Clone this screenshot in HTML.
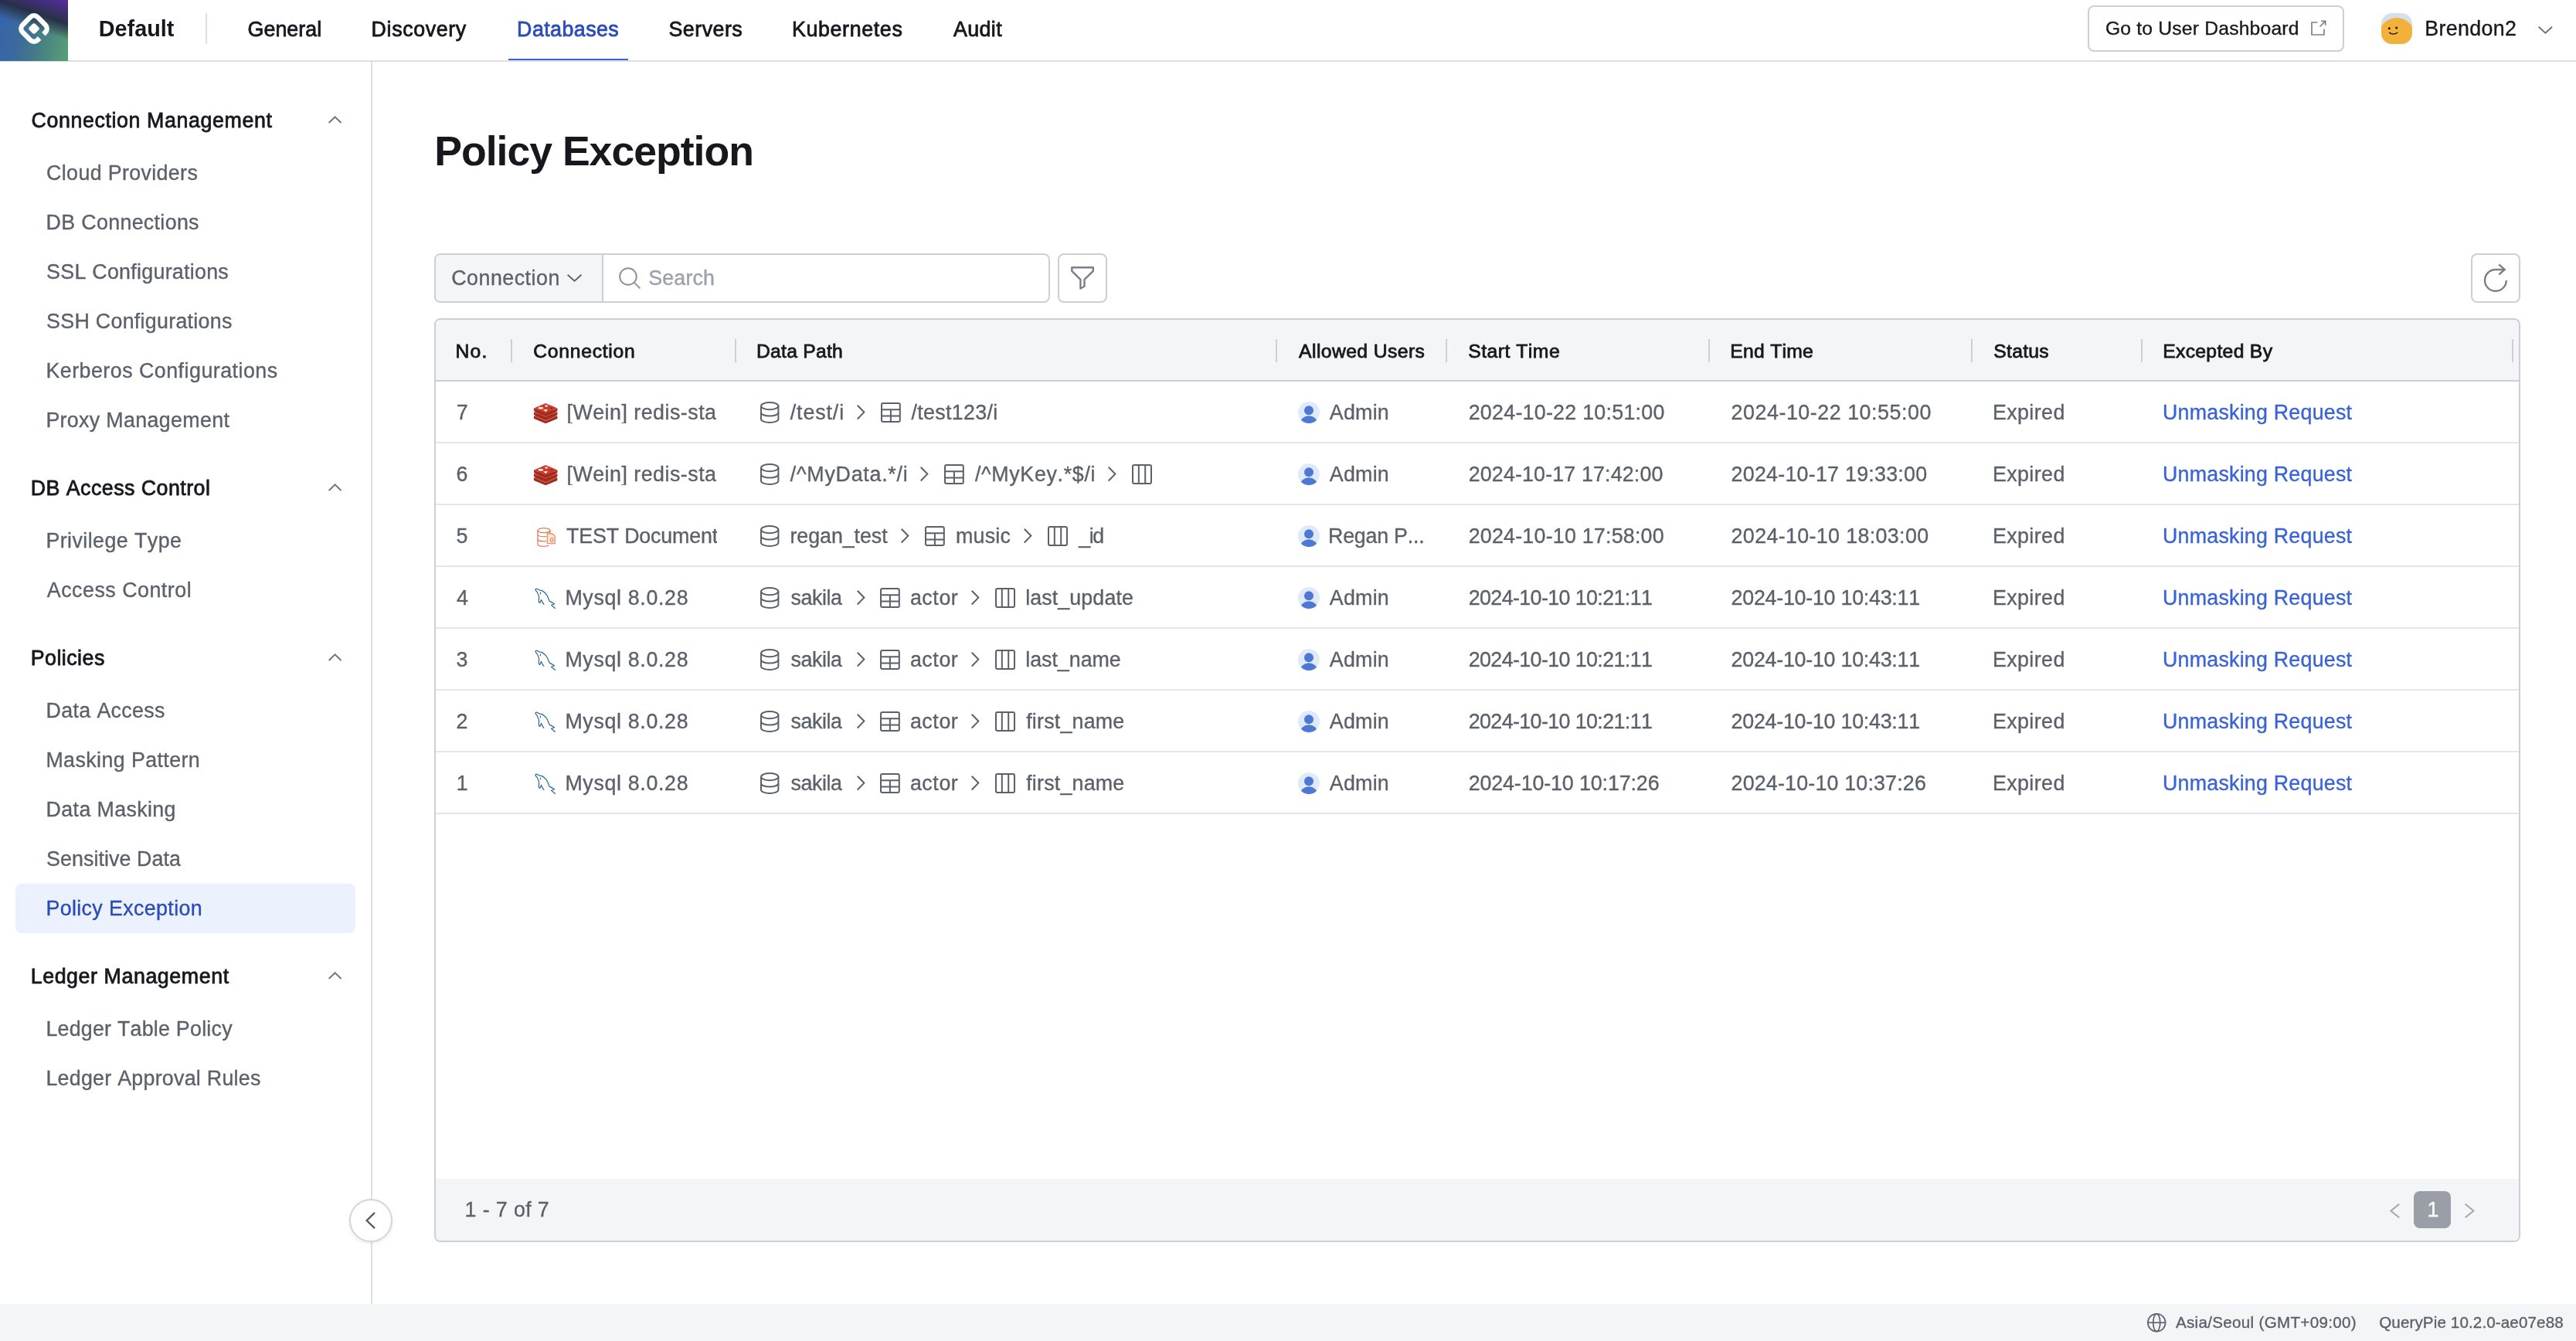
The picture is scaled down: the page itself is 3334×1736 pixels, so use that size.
<!DOCTYPE html>
<html lang="en">
<head>
<meta charset="utf-8">
<title>Policy Exception - QueryPie</title>
<style>
*{box-sizing:border-box;margin:0;padding:0}
html,body{width:3334px;height:1736px;overflow:hidden;background:#fff}
@media (max-width:1700px){html{zoom:.5}}
body{font-family:"Liberation Sans",sans-serif;color:#16181d;position:relative}
.abs{position:absolute}
svg{position:absolute;overflow:visible}
.t{position:absolute;white-space:nowrap;line-height:1;font-kerning:none}
#txt{position:absolute;left:0;top:0;width:3334px;height:1736px;will-change:transform}
#hdr{position:absolute;left:0;top:0;width:3334px;height:80px;border-bottom:2px solid #dcdfe5;background:#fff}
#logo{position:absolute;left:0;top:0;width:88px;height:79px;
background:
linear-gradient(19deg,rgba(40,50,74,0) 52%,rgba(40,50,70,.55) 62%,rgba(38,46,66,.96) 71%,#3d2f72 84%,#552e9c 100%),
linear-gradient(100deg,#3563ad 0%,#3a6a9d 30%,#43798a 55%,#4f8f7c 80%,#56a077 100%)}
#side{position:absolute;left:0;top:80px;width:482px;height:1608px;border-right:2px solid #dcdfe5}
#sel{position:absolute;left:20px;top:1144px;width:440px;height:64px;border-radius:8px;background:#ebf1fd}
#foot{position:absolute;left:0;top:1688px;width:3334px;height:48px;background:#f4f5f7}
.box{position:absolute;border:2px solid #cdcfd6;border-radius:8px;background:#fff}
#tbl{position:absolute;left:562px;top:412px;width:2700px;height:1196px;border:2px solid #cdcfd6;border-radius:8px;background:#fff;overflow:hidden}
#th{position:absolute;left:0;top:0;width:2696px;height:80px;background:#f4f5f7;border-bottom:2px solid #cdcfd6}
#tf{position:absolute;left:0;top:1112px;width:2696px;height:80px;background:#f4f5f7}
.sep{position:absolute;top:439px;width:2px;height:30px;background:#cdcfd6}
.rowline{position:absolute;left:564px;width:2696px;height:2px;background:#e3e6ea}
</style>
</head>
<body>
<div id="hdr"><div id="logo"></div><svg width="88" height="79" viewBox="0 0 88 79" style="left:0;top:0">
<g transform="translate(44 37) rotate(45)" fill="none" stroke="#fff" stroke-width="6.4">
<path d="M13.8 -3.7 L13.8 -7 A6.8 6.8 0 0 0 7 -13.8 L-7 -13.8 A6.8 6.8 0 0 0 -13.8 -7 L-13.8 7 A6.8 6.8 0 0 0 -7 13.8 L7 13.8 A6.8 6.8 0 0 0 13.8 7 L13.8 3.7"/>
<rect x="-5.6" y="-5.6" width="11.2" height="11.2" rx="3" fill="#fff" stroke="none"/></g></svg>
<div class="abs" style="left:266px;top:17px;width:2px;height:40px;background:#dcdfe5"></div>
<div class="abs" style="left:658px;top:76px;width:155px;height:2px;background:#3b62d6"></div>

<div class="box" style="left:2702px;top:7px;width:332px;height:60px"></div>
<svg class="abs" style="left:2990.0px;top:26.0px" width="22" height="22" viewBox="0 0 22 22" ><g fill="none" stroke="#7d828b" stroke-width="1.7"><path d="M9.5 3 H2 V19 H18 V11.5"/><path d="M12.5 8.5 L19.6 1.4 M14.2 1.3 H19.7 V6.8"/></g></svg>
<svg class="abs" style="left:3082.0px;top:17.0px" width="40" height="40" viewBox="0 0 40 40" ><defs><clipPath id="av"><rect width="40" height="40" rx="14"/></clipPath></defs><g clip-path="url(#av)"><rect width="40" height="40" fill="#d6dfec"/><circle cx="20" cy="29" r="23" fill="#f2b138"/><circle cx="10.3" cy="19.7" r="1.5" fill="#111"/><circle cx="19.7" cy="18.9" r="1.5" fill="#111"/><path d="M10.6 25.4 Q15.6 28.8 20.8 25.2" fill="none" stroke="#111" stroke-width="1.3" stroke-linecap="round"/></g></svg>
<svg class="abs" style="left:3285.0px;top:33.7px" width="18.8" height="10.1" viewBox="0 0 18.8 10.1" ><path d="M0.68 0.68 L9.40 8.73 L18.12 0.68" fill="none" stroke="#6b717c" stroke-width="1.9" stroke-linejoin="miter"/></svg>

</div>
<div id="side"></div>
<div id="sel"></div>
<svg class="abs" style="left:425.4px;top:150.3px" width="17.2" height="9.7" viewBox="0 0 17.2 9.7" ><path d="M0.68 9.02 L8.60 1.37 L16.52 9.02" fill="none" stroke="#6b717c" stroke-width="1.9" stroke-linejoin="miter"/></svg>
<svg class="abs" style="left:425.4px;top:626.3px" width="17.2" height="9.7" viewBox="0 0 17.2 9.7" ><path d="M0.68 9.02 L8.60 1.37 L16.52 9.02" fill="none" stroke="#6b717c" stroke-width="1.9" stroke-linejoin="miter"/></svg>
<svg class="abs" style="left:425.4px;top:846.3px" width="17.2" height="9.7" viewBox="0 0 17.2 9.7" ><path d="M0.68 9.02 L8.60 1.37 L16.52 9.02" fill="none" stroke="#6b717c" stroke-width="1.9" stroke-linejoin="miter"/></svg>
<svg class="abs" style="left:425.4px;top:1258.3px" width="17.2" height="9.7" viewBox="0 0 17.2 9.7" ><path d="M0.68 9.02 L8.60 1.37 L16.52 9.02" fill="none" stroke="#6b717c" stroke-width="1.9" stroke-linejoin="miter"/></svg>
<div id="foot"></div>

<div class="box" style="left:562px;top:328px;width:797px;height:64px;overflow:hidden"><div class="abs" style="left:0;top:0;width:217px;height:60px;background:#f4f5f7;border-right:2px solid #cdcfd6"></div></div>
<svg class="abs" style="left:733.5px;top:354.6px" width="19.1" height="10.2" viewBox="0 0 19.1 10.2" ><path d="M0.68 0.68 L9.55 8.83 L18.42 0.68" fill="none" stroke="#5d6470" stroke-width="1.9" stroke-linejoin="miter"/></svg>
<svg class="abs" style="left:800.0px;top:345.0px" width="30" height="30" viewBox="0 0 30 30" ><g fill="none" stroke="#8c939d" stroke-width="2"><circle cx="13" cy="13" r="10.8"/><path d="M20.6 20.6 L28.4 28.4"/></g></svg>
<div class="box" style="left:1369px;top:328px;width:64px;height:64px"></div>
<svg class="abs" style="left:1369.0px;top:328.0px" width="64" height="64" viewBox="0 0 64 64" ><path d="M18.3 18.3 H45.8 V22.9 L34.5 33.9 V42.8 L29.4 45.5 V33.9 L18.3 22.9Z" fill="none" stroke="#7a7f88" stroke-width="2.4" stroke-linejoin="round"/></svg>
<div class="box" style="left:3198px;top:328px;width:64px;height:64px"></div>
<svg class="abs" style="left:3198.0px;top:328.0px" width="64" height="64" viewBox="0 0 64 64" ><g fill="none" stroke="#7a7f88" stroke-width="2.4"><path d="M45.8 34.9 A13.9 13.9 0 1 1 31.9 21 H43.4"/><path d="M36.3 14.4 L43.7 20.9 L36.3 27.4"/></g></svg>

<div id="tbl"><div id="th"></div><div id="tf"></div></div>
<div class="sep" style="left:661px"></div>
<div class="sep" style="left:951px"></div>
<div class="sep" style="left:1651px"></div>
<div class="sep" style="left:1871px"></div>
<div class="sep" style="left:2211px"></div>
<div class="sep" style="left:2551px"></div>
<div class="sep" style="left:2771px"></div>
<div class="sep" style="left:3251px"></div>
<div class="rowline" style="top:572px"></div>
<div class="rowline" style="top:652px"></div>
<div class="rowline" style="top:732px"></div>
<div class="rowline" style="top:812px"></div>
<div class="rowline" style="top:892px"></div>
<div class="rowline" style="top:972px"></div>
<div class="rowline" style="top:1052px"></div>
<svg class="abs" style="left:690.9px;top:521.7px" width="30.4" height="26.4" viewBox="0 0 30.4 26.4" ><path d="M0 16.5 V19.9 L15.2 26.299999999999997 L30.4 19.9 V16.5 L15.2 22.9Z" fill="#9c2c1f"/><path d="M15.2 9.9 L30.4 16.5 L15.2 22.9 L0 16.5Z" fill="#c8412f"/><path d="M0 11.6 V15 L15.2 21.4 L30.4 15 V11.6 L15.2 18Z" fill="#9c2c1f"/><path d="M15.2 5 L30.4 11.6 L15.2 18 L0 11.6Z" fill="#c8412f"/><path d="M0 6.6 V10 L15.2 16.4 L30.4 10 V6.6 L15.2 13Z" fill="#9c2c1f"/><path d="M15.2 0 L30.4 6.6 L15.2 13 L0 6.6Z" fill="#cc3b2b"/><ellipse cx="8.9" cy="6.3" rx="3.3" ry="1.25" fill="#fff"/><path d="M15.7 1.7 l.9 1.1 1.9-.3 -1.2 1 .9 1.2 -1.7-.5 -1.3 1 0-1.4 -1.7-.6 1.8-.4Z" fill="#fff"/><path d="M11.9 8.5 L17.9 8.1 L15.6 10.9Z" fill="#fff"/><path d="M22.3 4.9 L24.9 6.1 L22.3 7.3Z" fill="#7a1a0c"/></svg>
<svg class="abs" style="left:984.0px;top:520.0px" width="24.4" height="28" viewBox="0 0 24.4 28" ><g fill="none" stroke="#5b616b" stroke-width="2"><ellipse cx="12.2" cy="5.6" rx="11.2" ry="4.6"/><path d="M1 5.6 V22.4 C1 25 6 27 12.2 27 S23.4 25 23.4 22.4 V5.6"/><path d="M1 14 C1 16.6 6 18.6 12.2 18.6 S23.4 16.6 23.4 14"/></g></svg>
<svg class="abs" style="left:1109.3px;top:524.4px" width="10.8" height="19.2" viewBox="0 0 10.8 19.2" ><path d="M0.72 0.72 L9.36 9.60 L0.72 18.48" fill="none" stroke="#5b616b" stroke-width="2" stroke-linejoin="miter"/></svg>
<svg class="abs" style="left:1140.0px;top:521.0px" width="25.8" height="26" viewBox="0 0 25.8 26" ><g fill="none" stroke="#5b616b" stroke-width="2"><rect x="1" y="1" width="23.8" height="24" rx="2"/><path d="M1 9.2 H24.8 M1 17.4 H24.8 M12.9 9.2 V25"/></g></svg>
<svg class="abs" style="left:1680.0px;top:520.0px" width="28" height="28" viewBox="0 0 28 28" ><defs><clipPath id="uc1"><circle cx="14" cy="14" r="14"/></clipPath></defs><circle cx="14" cy="14" r="14" fill="#dfeafb"/><circle cx="14" cy="11.2" r="6" fill="#4e77d6"/><ellipse cx="14" cy="28" rx="11.2" ry="9.7" fill="#4e77d6" clip-path="url(#uc1)"/></svg>
<svg class="abs" style="left:690.9px;top:601.7px" width="30.4" height="26.4" viewBox="0 0 30.4 26.4" ><path d="M0 16.5 V19.9 L15.2 26.299999999999997 L30.4 19.9 V16.5 L15.2 22.9Z" fill="#9c2c1f"/><path d="M15.2 9.9 L30.4 16.5 L15.2 22.9 L0 16.5Z" fill="#c8412f"/><path d="M0 11.6 V15 L15.2 21.4 L30.4 15 V11.6 L15.2 18Z" fill="#9c2c1f"/><path d="M15.2 5 L30.4 11.6 L15.2 18 L0 11.6Z" fill="#c8412f"/><path d="M0 6.6 V10 L15.2 16.4 L30.4 10 V6.6 L15.2 13Z" fill="#9c2c1f"/><path d="M15.2 0 L30.4 6.6 L15.2 13 L0 6.6Z" fill="#cc3b2b"/><ellipse cx="8.9" cy="6.3" rx="3.3" ry="1.25" fill="#fff"/><path d="M15.7 1.7 l.9 1.1 1.9-.3 -1.2 1 .9 1.2 -1.7-.5 -1.3 1 0-1.4 -1.7-.6 1.8-.4Z" fill="#fff"/><path d="M11.9 8.5 L17.9 8.1 L15.6 10.9Z" fill="#fff"/><path d="M22.3 4.9 L24.9 6.1 L22.3 7.3Z" fill="#7a1a0c"/></svg>
<svg class="abs" style="left:984.0px;top:600.0px" width="24.4" height="28" viewBox="0 0 24.4 28" ><g fill="none" stroke="#5b616b" stroke-width="2"><ellipse cx="12.2" cy="5.6" rx="11.2" ry="4.6"/><path d="M1 5.6 V22.4 C1 25 6 27 12.2 27 S23.4 25 23.4 22.4 V5.6"/><path d="M1 14 C1 16.6 6 18.6 12.2 18.6 S23.4 16.6 23.4 14"/></g></svg>
<svg class="abs" style="left:1191.3px;top:604.4px" width="10.8" height="19.2" viewBox="0 0 10.8 19.2" ><path d="M0.72 0.72 L9.36 9.60 L0.72 18.48" fill="none" stroke="#5b616b" stroke-width="2" stroke-linejoin="miter"/></svg>
<svg class="abs" style="left:1222.2px;top:601.0px" width="25.8" height="26" viewBox="0 0 25.8 26" ><g fill="none" stroke="#5b616b" stroke-width="2"><rect x="1" y="1" width="23.8" height="24" rx="2"/><path d="M1 9.2 H24.8 M1 17.4 H24.8 M12.9 9.2 V25"/></g></svg>
<svg class="abs" style="left:1434.1px;top:604.4px" width="10.8" height="19.2" viewBox="0 0 10.8 19.2" ><path d="M0.72 0.72 L9.36 9.60 L0.72 18.48" fill="none" stroke="#5b616b" stroke-width="2" stroke-linejoin="miter"/></svg>
<svg class="abs" style="left:1465.2px;top:601.0px" width="26" height="26" viewBox="0 0 26 26" ><g fill="none" stroke="#5b616b" stroke-width="2"><rect x="1" y="1" width="24" height="24" rx="2"/><path d="M8.8 1 V25 M17.2 1 V25"/></g></svg>
<svg class="abs" style="left:1680.0px;top:600.0px" width="28" height="28" viewBox="0 0 28 28" ><defs><clipPath id="uc2"><circle cx="14" cy="14" r="14"/></clipPath></defs><circle cx="14" cy="14" r="14" fill="#dfeafb"/><circle cx="14" cy="11.2" r="6" fill="#4e77d6"/><ellipse cx="14" cy="28" rx="11.2" ry="9.7" fill="#4e77d6" clip-path="url(#uc2)"/></svg>
<svg class="abs" style="left:694.5px;top:682.5px" width="24" height="25" viewBox="0 0 24 25" ><g fill="none" stroke="#e2633d" stroke-width="1.05"><ellipse cx="9" cy="3.7" rx="8.05" ry="3"/><path d="M.95 3.7 V21.4 C.95 23.2 4.4 24.3 9 24.3 C11.6 24.3 13.8 23.9 15.2 23.3"/><path d="M17.05 3.7 V7"/><path d="M.95 9.4 C1.6 11 5 11.8 9 11.8 C10.2 11.8 11.2 11.7 12.2 11.6"/><path d="M.95 15.5 C1.6 17 5 17.8 9 17.8 C10.2 17.8 11.2 17.7 12.2 17.6"/></g><path d="M13.4 7.8 H19.9 L23.2 10.9 V20.8 H13.4Z" fill="#fbe6de" stroke="#e9775c" stroke-width="1.1" stroke-linejoin="round"/><path d="M13.4 20.8 V7.8 H19.9" fill="none" stroke="#eda253" stroke-width="1.3"/><path d="M19.6 13.6 C18.2 13.4 17.4 14.6 17.4 16 C17.4 17.6 18.4 18.6 19.8 18.3 M20.4 14.6 C21 15.6 21 17 20.2 18" fill="none" stroke="#e2633d" stroke-width="1"/><circle cx="20.3" cy="13.6" r=".6" fill="#e2633d"/></svg>
<svg class="abs" style="left:984.0px;top:680.0px" width="24.4" height="28" viewBox="0 0 24.4 28" ><g fill="none" stroke="#5b616b" stroke-width="2"><ellipse cx="12.2" cy="5.6" rx="11.2" ry="4.6"/><path d="M1 5.6 V22.4 C1 25 6 27 12.2 27 S23.4 25 23.4 22.4 V5.6"/><path d="M1 14 C1 16.6 6 18.6 12.2 18.6 S23.4 16.6 23.4 14"/></g></svg>
<svg class="abs" style="left:1166.3px;top:684.4px" width="10.8" height="19.2" viewBox="0 0 10.8 19.2" ><path d="M0.72 0.72 L9.36 9.60 L0.72 18.48" fill="none" stroke="#5b616b" stroke-width="2" stroke-linejoin="miter"/></svg>
<svg class="abs" style="left:1197.2px;top:681.0px" width="25.8" height="26" viewBox="0 0 25.8 26" ><g fill="none" stroke="#5b616b" stroke-width="2"><rect x="1" y="1" width="23.8" height="24" rx="2"/><path d="M1 9.2 H24.8 M1 17.4 H24.8 M12.9 9.2 V25"/></g></svg>
<svg class="abs" style="left:1325.0px;top:684.4px" width="10.8" height="19.2" viewBox="0 0 10.8 19.2" ><path d="M0.72 0.72 L9.36 9.60 L0.72 18.48" fill="none" stroke="#5b616b" stroke-width="2" stroke-linejoin="miter"/></svg>
<svg class="abs" style="left:1355.9px;top:681.0px" width="26" height="26" viewBox="0 0 26 26" ><g fill="none" stroke="#5b616b" stroke-width="2"><rect x="1" y="1" width="24" height="24" rx="2"/><path d="M8.8 1 V25 M17.2 1 V25"/></g></svg>
<svg class="abs" style="left:1680.0px;top:680.0px" width="28" height="28" viewBox="0 0 28 28" ><defs><clipPath id="uc3"><circle cx="14" cy="14" r="14"/></clipPath></defs><circle cx="14" cy="14" r="14" fill="#dfeafb"/><circle cx="14" cy="11.2" r="6" fill="#4e77d6"/><ellipse cx="14" cy="28" rx="11.2" ry="9.7" fill="#4e77d6" clip-path="url(#uc3)"/></svg>
<svg class="abs" style="left:686.0px;top:754.0px" width="42" height="40" viewBox="0 0 42 40" ><g fill="none" stroke="#20608f" stroke-width="1.15" stroke-linejoin="round" stroke-linecap="round"><path d="M7.3 9.2 C7 8.4 8 8 8.7 8.2 C9.4 8.3 9.9 8.6 10.4 8.9 C11.2 9.5 11.8 10 12.5 10.1 C13.3 10.3 14 10.2 14.9 10.4 C16 10.8 17 11.5 17.9 12.2 C19 13 19.9 14 20.6 14.9 C21.5 16 22.2 17.1 22.7 18.2 C23.2 19.2 23.5 20.2 23.9 21.2 C24.2 22.2 24.6 23.2 25.1 23.9 C25.6 24.5 26.2 24.8 26.9 25.1 C27.8 25.5 28.7 25.9 29.6 26.4 C30.3 26.8 31 27.3 31.6 27.8 C30.2 28.2 28.8 28.7 27.5 29.4 C28.3 30.1 29.1 30.7 29.9 31.3 C30.8 32 31.7 32.7 32.5 33.4"/><path d="M7.3 9.2 C7.1 10.2 7.6 11 8.3 11.5 C8.7 11.8 9 12 9.2 12.4 C9.5 13 9.7 13.7 9.9 14.3 C10.3 15.1 10.7 15.9 11 16.7 C11.4 17.6 11.6 18.5 11.6 19.4 C11.6 20.5 11.4 21.6 11.3 22.7 C11.3 23.7 11.3 24.6 11.6 25.4 C11.9 26 12.3 26.4 12.8 26.4 C13.4 25.2 14 23.8 14.5 22.4 C14.8 23.2 15.1 24 15.5 24.8 C16.2 26.1 17 27.3 17.9 28.4"/><path d="M13.4 13.1 V14.8"/></g></svg>
<svg class="abs" style="left:984.0px;top:760.0px" width="24.4" height="28" viewBox="0 0 24.4 28" ><g fill="none" stroke="#5b616b" stroke-width="2"><ellipse cx="12.2" cy="5.6" rx="11.2" ry="4.6"/><path d="M1 5.6 V22.4 C1 25 6 27 12.2 27 S23.4 25 23.4 22.4 V5.6"/><path d="M1 14 C1 16.6 6 18.6 12.2 18.6 S23.4 16.6 23.4 14"/></g></svg>
<svg class="abs" style="left:1108.5px;top:764.4px" width="10.8" height="19.2" viewBox="0 0 10.8 19.2" ><path d="M0.72 0.72 L9.36 9.60 L0.72 18.48" fill="none" stroke="#5b616b" stroke-width="2" stroke-linejoin="miter"/></svg>
<svg class="abs" style="left:1139.3px;top:761.0px" width="25.8" height="26" viewBox="0 0 25.8 26" ><g fill="none" stroke="#5b616b" stroke-width="2"><rect x="1" y="1" width="23.8" height="24" rx="2"/><path d="M1 9.2 H24.8 M1 17.4 H24.8 M12.9 9.2 V25"/></g></svg>
<svg class="abs" style="left:1257.4px;top:764.4px" width="10.8" height="19.2" viewBox="0 0 10.8 19.2" ><path d="M0.72 0.72 L9.36 9.60 L0.72 18.48" fill="none" stroke="#5b616b" stroke-width="2" stroke-linejoin="miter"/></svg>
<svg class="abs" style="left:1288.2px;top:761.0px" width="26" height="26" viewBox="0 0 26 26" ><g fill="none" stroke="#5b616b" stroke-width="2"><rect x="1" y="1" width="24" height="24" rx="2"/><path d="M8.8 1 V25 M17.2 1 V25"/></g></svg>
<svg class="abs" style="left:1680.0px;top:760.0px" width="28" height="28" viewBox="0 0 28 28" ><defs><clipPath id="uc4"><circle cx="14" cy="14" r="14"/></clipPath></defs><circle cx="14" cy="14" r="14" fill="#dfeafb"/><circle cx="14" cy="11.2" r="6" fill="#4e77d6"/><ellipse cx="14" cy="28" rx="11.2" ry="9.7" fill="#4e77d6" clip-path="url(#uc4)"/></svg>
<svg class="abs" style="left:686.0px;top:834.0px" width="42" height="40" viewBox="0 0 42 40" ><g fill="none" stroke="#20608f" stroke-width="1.15" stroke-linejoin="round" stroke-linecap="round"><path d="M7.3 9.2 C7 8.4 8 8 8.7 8.2 C9.4 8.3 9.9 8.6 10.4 8.9 C11.2 9.5 11.8 10 12.5 10.1 C13.3 10.3 14 10.2 14.9 10.4 C16 10.8 17 11.5 17.9 12.2 C19 13 19.9 14 20.6 14.9 C21.5 16 22.2 17.1 22.7 18.2 C23.2 19.2 23.5 20.2 23.9 21.2 C24.2 22.2 24.6 23.2 25.1 23.9 C25.6 24.5 26.2 24.8 26.9 25.1 C27.8 25.5 28.7 25.9 29.6 26.4 C30.3 26.8 31 27.3 31.6 27.8 C30.2 28.2 28.8 28.7 27.5 29.4 C28.3 30.1 29.1 30.7 29.9 31.3 C30.8 32 31.7 32.7 32.5 33.4"/><path d="M7.3 9.2 C7.1 10.2 7.6 11 8.3 11.5 C8.7 11.8 9 12 9.2 12.4 C9.5 13 9.7 13.7 9.9 14.3 C10.3 15.1 10.7 15.9 11 16.7 C11.4 17.6 11.6 18.5 11.6 19.4 C11.6 20.5 11.4 21.6 11.3 22.7 C11.3 23.7 11.3 24.6 11.6 25.4 C11.9 26 12.3 26.4 12.8 26.4 C13.4 25.2 14 23.8 14.5 22.4 C14.8 23.2 15.1 24 15.5 24.8 C16.2 26.1 17 27.3 17.9 28.4"/><path d="M13.4 13.1 V14.8"/></g></svg>
<svg class="abs" style="left:984.0px;top:840.0px" width="24.4" height="28" viewBox="0 0 24.4 28" ><g fill="none" stroke="#5b616b" stroke-width="2"><ellipse cx="12.2" cy="5.6" rx="11.2" ry="4.6"/><path d="M1 5.6 V22.4 C1 25 6 27 12.2 27 S23.4 25 23.4 22.4 V5.6"/><path d="M1 14 C1 16.6 6 18.6 12.2 18.6 S23.4 16.6 23.4 14"/></g></svg>
<svg class="abs" style="left:1108.5px;top:844.4px" width="10.8" height="19.2" viewBox="0 0 10.8 19.2" ><path d="M0.72 0.72 L9.36 9.60 L0.72 18.48" fill="none" stroke="#5b616b" stroke-width="2" stroke-linejoin="miter"/></svg>
<svg class="abs" style="left:1139.3px;top:841.0px" width="25.8" height="26" viewBox="0 0 25.8 26" ><g fill="none" stroke="#5b616b" stroke-width="2"><rect x="1" y="1" width="23.8" height="24" rx="2"/><path d="M1 9.2 H24.8 M1 17.4 H24.8 M12.9 9.2 V25"/></g></svg>
<svg class="abs" style="left:1257.4px;top:844.4px" width="10.8" height="19.2" viewBox="0 0 10.8 19.2" ><path d="M0.72 0.72 L9.36 9.60 L0.72 18.48" fill="none" stroke="#5b616b" stroke-width="2" stroke-linejoin="miter"/></svg>
<svg class="abs" style="left:1288.2px;top:841.0px" width="26" height="26" viewBox="0 0 26 26" ><g fill="none" stroke="#5b616b" stroke-width="2"><rect x="1" y="1" width="24" height="24" rx="2"/><path d="M8.8 1 V25 M17.2 1 V25"/></g></svg>
<svg class="abs" style="left:1680.0px;top:840.0px" width="28" height="28" viewBox="0 0 28 28" ><defs><clipPath id="uc5"><circle cx="14" cy="14" r="14"/></clipPath></defs><circle cx="14" cy="14" r="14" fill="#dfeafb"/><circle cx="14" cy="11.2" r="6" fill="#4e77d6"/><ellipse cx="14" cy="28" rx="11.2" ry="9.7" fill="#4e77d6" clip-path="url(#uc5)"/></svg>
<svg class="abs" style="left:686.0px;top:914.0px" width="42" height="40" viewBox="0 0 42 40" ><g fill="none" stroke="#20608f" stroke-width="1.15" stroke-linejoin="round" stroke-linecap="round"><path d="M7.3 9.2 C7 8.4 8 8 8.7 8.2 C9.4 8.3 9.9 8.6 10.4 8.9 C11.2 9.5 11.8 10 12.5 10.1 C13.3 10.3 14 10.2 14.9 10.4 C16 10.8 17 11.5 17.9 12.2 C19 13 19.9 14 20.6 14.9 C21.5 16 22.2 17.1 22.7 18.2 C23.2 19.2 23.5 20.2 23.9 21.2 C24.2 22.2 24.6 23.2 25.1 23.9 C25.6 24.5 26.2 24.8 26.9 25.1 C27.8 25.5 28.7 25.9 29.6 26.4 C30.3 26.8 31 27.3 31.6 27.8 C30.2 28.2 28.8 28.7 27.5 29.4 C28.3 30.1 29.1 30.7 29.9 31.3 C30.8 32 31.7 32.7 32.5 33.4"/><path d="M7.3 9.2 C7.1 10.2 7.6 11 8.3 11.5 C8.7 11.8 9 12 9.2 12.4 C9.5 13 9.7 13.7 9.9 14.3 C10.3 15.1 10.7 15.9 11 16.7 C11.4 17.6 11.6 18.5 11.6 19.4 C11.6 20.5 11.4 21.6 11.3 22.7 C11.3 23.7 11.3 24.6 11.6 25.4 C11.9 26 12.3 26.4 12.8 26.4 C13.4 25.2 14 23.8 14.5 22.4 C14.8 23.2 15.1 24 15.5 24.8 C16.2 26.1 17 27.3 17.9 28.4"/><path d="M13.4 13.1 V14.8"/></g></svg>
<svg class="abs" style="left:984.0px;top:920.0px" width="24.4" height="28" viewBox="0 0 24.4 28" ><g fill="none" stroke="#5b616b" stroke-width="2"><ellipse cx="12.2" cy="5.6" rx="11.2" ry="4.6"/><path d="M1 5.6 V22.4 C1 25 6 27 12.2 27 S23.4 25 23.4 22.4 V5.6"/><path d="M1 14 C1 16.6 6 18.6 12.2 18.6 S23.4 16.6 23.4 14"/></g></svg>
<svg class="abs" style="left:1108.5px;top:924.4px" width="10.8" height="19.2" viewBox="0 0 10.8 19.2" ><path d="M0.72 0.72 L9.36 9.60 L0.72 18.48" fill="none" stroke="#5b616b" stroke-width="2" stroke-linejoin="miter"/></svg>
<svg class="abs" style="left:1139.3px;top:921.0px" width="25.8" height="26" viewBox="0 0 25.8 26" ><g fill="none" stroke="#5b616b" stroke-width="2"><rect x="1" y="1" width="23.8" height="24" rx="2"/><path d="M1 9.2 H24.8 M1 17.4 H24.8 M12.9 9.2 V25"/></g></svg>
<svg class="abs" style="left:1257.4px;top:924.4px" width="10.8" height="19.2" viewBox="0 0 10.8 19.2" ><path d="M0.72 0.72 L9.36 9.60 L0.72 18.48" fill="none" stroke="#5b616b" stroke-width="2" stroke-linejoin="miter"/></svg>
<svg class="abs" style="left:1288.2px;top:921.0px" width="26" height="26" viewBox="0 0 26 26" ><g fill="none" stroke="#5b616b" stroke-width="2"><rect x="1" y="1" width="24" height="24" rx="2"/><path d="M8.8 1 V25 M17.2 1 V25"/></g></svg>
<svg class="abs" style="left:1680.0px;top:920.0px" width="28" height="28" viewBox="0 0 28 28" ><defs><clipPath id="uc6"><circle cx="14" cy="14" r="14"/></clipPath></defs><circle cx="14" cy="14" r="14" fill="#dfeafb"/><circle cx="14" cy="11.2" r="6" fill="#4e77d6"/><ellipse cx="14" cy="28" rx="11.2" ry="9.7" fill="#4e77d6" clip-path="url(#uc6)"/></svg>
<svg class="abs" style="left:686.0px;top:994.0px" width="42" height="40" viewBox="0 0 42 40" ><g fill="none" stroke="#20608f" stroke-width="1.15" stroke-linejoin="round" stroke-linecap="round"><path d="M7.3 9.2 C7 8.4 8 8 8.7 8.2 C9.4 8.3 9.9 8.6 10.4 8.9 C11.2 9.5 11.8 10 12.5 10.1 C13.3 10.3 14 10.2 14.9 10.4 C16 10.8 17 11.5 17.9 12.2 C19 13 19.9 14 20.6 14.9 C21.5 16 22.2 17.1 22.7 18.2 C23.2 19.2 23.5 20.2 23.9 21.2 C24.2 22.2 24.6 23.2 25.1 23.9 C25.6 24.5 26.2 24.8 26.9 25.1 C27.8 25.5 28.7 25.9 29.6 26.4 C30.3 26.8 31 27.3 31.6 27.8 C30.2 28.2 28.8 28.7 27.5 29.4 C28.3 30.1 29.1 30.7 29.9 31.3 C30.8 32 31.7 32.7 32.5 33.4"/><path d="M7.3 9.2 C7.1 10.2 7.6 11 8.3 11.5 C8.7 11.8 9 12 9.2 12.4 C9.5 13 9.7 13.7 9.9 14.3 C10.3 15.1 10.7 15.9 11 16.7 C11.4 17.6 11.6 18.5 11.6 19.4 C11.6 20.5 11.4 21.6 11.3 22.7 C11.3 23.7 11.3 24.6 11.6 25.4 C11.9 26 12.3 26.4 12.8 26.4 C13.4 25.2 14 23.8 14.5 22.4 C14.8 23.2 15.1 24 15.5 24.8 C16.2 26.1 17 27.3 17.9 28.4"/><path d="M13.4 13.1 V14.8"/></g></svg>
<svg class="abs" style="left:984.0px;top:1000.0px" width="24.4" height="28" viewBox="0 0 24.4 28" ><g fill="none" stroke="#5b616b" stroke-width="2"><ellipse cx="12.2" cy="5.6" rx="11.2" ry="4.6"/><path d="M1 5.6 V22.4 C1 25 6 27 12.2 27 S23.4 25 23.4 22.4 V5.6"/><path d="M1 14 C1 16.6 6 18.6 12.2 18.6 S23.4 16.6 23.4 14"/></g></svg>
<svg class="abs" style="left:1108.5px;top:1004.4px" width="10.8" height="19.2" viewBox="0 0 10.8 19.2" ><path d="M0.72 0.72 L9.36 9.60 L0.72 18.48" fill="none" stroke="#5b616b" stroke-width="2" stroke-linejoin="miter"/></svg>
<svg class="abs" style="left:1139.3px;top:1001.0px" width="25.8" height="26" viewBox="0 0 25.8 26" ><g fill="none" stroke="#5b616b" stroke-width="2"><rect x="1" y="1" width="23.8" height="24" rx="2"/><path d="M1 9.2 H24.8 M1 17.4 H24.8 M12.9 9.2 V25"/></g></svg>
<svg class="abs" style="left:1257.4px;top:1004.4px" width="10.8" height="19.2" viewBox="0 0 10.8 19.2" ><path d="M0.72 0.72 L9.36 9.60 L0.72 18.48" fill="none" stroke="#5b616b" stroke-width="2" stroke-linejoin="miter"/></svg>
<svg class="abs" style="left:1288.2px;top:1001.0px" width="26" height="26" viewBox="0 0 26 26" ><g fill="none" stroke="#5b616b" stroke-width="2"><rect x="1" y="1" width="24" height="24" rx="2"/><path d="M8.8 1 V25 M17.2 1 V25"/></g></svg>
<svg class="abs" style="left:1680.0px;top:1000.0px" width="28" height="28" viewBox="0 0 28 28" ><defs><clipPath id="uc7"><circle cx="14" cy="14" r="14"/></clipPath></defs><circle cx="14" cy="14" r="14" fill="#dfeafb"/><circle cx="14" cy="11.2" r="6" fill="#4e77d6"/><ellipse cx="14" cy="28" rx="11.2" ry="9.7" fill="#4e77d6" clip-path="url(#uc7)"/></svg>

<svg class="abs" style="left:3093.3px;top:1557.5px" width="12.8" height="19" viewBox="0 0 12.8 19" ><path d="M12.12 0.68 L1.37 9.50 L12.12 18.32" fill="none" stroke="#a0a5ad" stroke-width="1.9" stroke-linejoin="miter"/></svg>
<div class="abs" style="left:3124px;top:1542px;width:48px;height:48px;border-radius:8px;background:#9a9ea6"></div>
<svg class="abs" style="left:3189.9px;top:1557.5px" width="12.8" height="19" viewBox="0 0 12.8 19" ><path d="M0.68 0.68 L11.43 9.50 L0.68 18.32" fill="none" stroke="#a0a5ad" stroke-width="1.9" stroke-linejoin="miter"/></svg>


<div class="abs" style="left:452px;top:1552px;width:56px;height:56px;border-radius:28px;background:#fff;border:2px solid #d3d6dc;box-shadow:0 2px 4px rgba(0,0,0,.08)"></div>
<svg class="abs" style="left:473.3px;top:1568.8px" width="12.8" height="22" viewBox="0 0 12.8 22" ><path d="M11.97 0.83 L1.66 11.00 L11.97 21.17" fill="none" stroke="#555a62" stroke-width="2.3" stroke-linejoin="miter"/></svg>


<svg class="abs" style="left:2778.6px;top:1699.6px" width="24.5" height="24.5" viewBox="0 0 24.5 24.5" ><g fill="none" stroke="#5d6470" stroke-width="1.7"><circle cx="12.25" cy="12.25" r="11.4"/><ellipse cx="12.25" cy="12.25" rx="4.5" ry="11.4"/><path d="M.9 12.25 H23.6"/></g></svg>

<div id="txt">
<div class="t" style="left:127.7px;top:23px;font-size:28.8px;letter-spacing:0.02px;color:#16181d;font-weight:700">Default</div>
<div class="t" style="left:320.5px;top:25px;font-size:26.8px;letter-spacing:0.07px;color:#16181d;-webkit-text-stroke:0.8px #16181d">General</div>
<div class="t" style="left:480.6px;top:25px;font-size:26.8px;letter-spacing:0.63px;color:#16181d;-webkit-text-stroke:0.8px #16181d">Discovery</div>
<div class="t" style="left:669.1px;top:25px;font-size:26.8px;letter-spacing:0.44px;color:#2b4bb8;-webkit-text-stroke:0.8px #2b4bb8">Databases</div>
<div class="t" style="left:865.5px;top:25px;font-size:26.8px;letter-spacing:0.48px;color:#16181d;-webkit-text-stroke:0.8px #16181d">Servers</div>
<div class="t" style="left:1024.9px;top:25px;font-size:26.8px;letter-spacing:0.65px;color:#16181d;-webkit-text-stroke:0.8px #16181d">Kubernetes</div>
<div class="t" style="left:1233.9px;top:25px;font-size:26.8px;letter-spacing:0.42px;color:#16181d;-webkit-text-stroke:0.8px #16181d">Audit</div>
<div class="t" style="left:2724.9px;top:25px;font-size:24.7px;letter-spacing:0.19px;color:#16181d;-webkit-text-stroke:0.35px #16181d">Go to User Dashboard</div>
<div class="t" style="left:3138.2px;top:24px;font-size:26.8px;letter-spacing:0.36px;color:#16181d;-webkit-text-stroke:0.35px #16181d">Brendon2</div>
<div class="t" style="left:40.5px;top:143px;font-size:26.8px;letter-spacing:0.60px;color:#16181d;-webkit-text-stroke:0.8px #16181d">Connection Management</div>
<div class="t" style="left:60.1px;top:211px;font-size:26.8px;letter-spacing:0.36px;color:#5b616b;-webkit-text-stroke:0.35px #5b616b">Cloud Providers</div>
<div class="t" style="left:59.6px;top:275px;font-size:26.8px;letter-spacing:0.33px;color:#5b616b;-webkit-text-stroke:0.35px #5b616b">DB Connections</div>
<div class="t" style="left:60.1px;top:339px;font-size:26.8px;letter-spacing:0.28px;color:#5b616b;-webkit-text-stroke:0.35px #5b616b">SSL Configurations</div>
<div class="t" style="left:60.1px;top:403px;font-size:26.8px;letter-spacing:0.29px;color:#5b616b;-webkit-text-stroke:0.35px #5b616b">SSH Configurations</div>
<div class="t" style="left:59.4px;top:467px;font-size:26.8px;letter-spacing:0.49px;color:#5b616b;-webkit-text-stroke:0.35px #5b616b">Kerberos Configurations</div>
<div class="t" style="left:59.4px;top:531px;font-size:26.8px;letter-spacing:0.34px;color:#5b616b;-webkit-text-stroke:0.35px #5b616b">Proxy Management</div>
<div class="t" style="left:39.7px;top:619px;font-size:26.8px;letter-spacing:0.46px;color:#16181d;-webkit-text-stroke:0.8px #16181d">DB Access Control</div>
<div class="t" style="left:59.4px;top:687px;font-size:26.8px;letter-spacing:0.44px;color:#5b616b;-webkit-text-stroke:0.35px #5b616b">Privilege Type</div>
<div class="t" style="left:60.8px;top:751px;font-size:26.8px;letter-spacing:0.51px;color:#5b616b;-webkit-text-stroke:0.35px #5b616b">Access Control</div>
<div class="t" style="left:39.7px;top:839px;font-size:26.8px;letter-spacing:0.47px;color:#16181d;-webkit-text-stroke:0.8px #16181d">Policies</div>
<div class="t" style="left:59.6px;top:907px;font-size:26.8px;letter-spacing:0.35px;color:#5b616b;-webkit-text-stroke:0.35px #5b616b">Data Access</div>
<div class="t" style="left:59.4px;top:971px;font-size:26.8px;letter-spacing:0.41px;color:#5b616b;-webkit-text-stroke:0.35px #5b616b">Masking Pattern</div>
<div class="t" style="left:59.6px;top:1035px;font-size:26.8px;letter-spacing:0.37px;color:#5b616b;-webkit-text-stroke:0.35px #5b616b">Data Masking</div>
<div class="t" style="left:60.0px;top:1099px;font-size:26.8px;letter-spacing:0.09px;color:#5b616b;-webkit-text-stroke:0.35px #5b616b">Sensitive Data</div>
<div class="t" style="left:59.4px;top:1163px;font-size:26.8px;letter-spacing:0.38px;color:#2b4bb8;-webkit-text-stroke:0.35px #2b4bb8">Policy Exception</div>
<div class="t" style="left:39.7px;top:1251px;font-size:26.8px;letter-spacing:0.57px;color:#16181d;-webkit-text-stroke:0.8px #16181d">Ledger Management</div>
<div class="t" style="left:59.4px;top:1319px;font-size:26.8px;letter-spacing:0.24px;color:#5b616b;-webkit-text-stroke:0.35px #5b616b">Ledger Table Policy</div>
<div class="t" style="left:59.4px;top:1383px;font-size:26.8px;letter-spacing:0.27px;color:#5b616b;-webkit-text-stroke:0.35px #5b616b">Ledger Approval Rules</div>
<div class="t" style="left:562.2px;top:169px;font-size:53.6px;letter-spacing:-1.01px;color:#16181d;font-weight:700">Policy Exception</div>
<div class="t" style="left:584.2px;top:347px;font-size:26.8px;letter-spacing:0.51px;color:#5b616b;-webkit-text-stroke:0.35px #5b616b">Connection</div>
<div class="t" style="left:839.2px;top:347px;font-size:26.8px;letter-spacing:0.17px;color:#9aa1ab;-webkit-text-stroke:0.35px #9aa1ab">Search</div>
<div class="t" style="left:589.4px;top:443px;font-size:24.7px;letter-spacing:1.22px;color:#16181d;-webkit-text-stroke:0.8px #16181d">No.</div>
<div class="t" style="left:690.3px;top:443px;font-size:24.7px;letter-spacing:0.73px;color:#16181d;-webkit-text-stroke:0.8px #16181d">Connection</div>
<div class="t" style="left:979.0px;top:443px;font-size:24.7px;letter-spacing:0.24px;color:#16181d;-webkit-text-stroke:0.8px #16181d">Data Path</div>
<div class="t" style="left:1681.1px;top:443px;font-size:24.7px;letter-spacing:0.42px;color:#16181d;-webkit-text-stroke:0.8px #16181d">Allowed Users</div>
<div class="t" style="left:1900.3px;top:443px;font-size:24.7px;letter-spacing:0.50px;color:#16181d;-webkit-text-stroke:0.8px #16181d">Start Time</div>
<div class="t" style="left:2239.3px;top:443px;font-size:24.7px;letter-spacing:0.27px;color:#16181d;-webkit-text-stroke:0.8px #16181d">End Time</div>
<div class="t" style="left:2580.3px;top:443px;font-size:24.7px;letter-spacing:0.27px;color:#16181d;-webkit-text-stroke:0.8px #16181d">Status</div>
<div class="t" style="left:2799.2px;top:443px;font-size:24.7px;letter-spacing:0.32px;color:#16181d;-webkit-text-stroke:0.8px #16181d">Excepted By</div>
<div class="t" style="left:590.7px;top:521px;font-size:26.8px;letter-spacing:0.00px;color:#5b616b;-webkit-text-stroke:0.35px #5b616b">7</div>
<div class="t" style="left:733.5px;top:521px;font-size:26.8px;letter-spacing:0.49px;color:#5b616b;-webkit-text-stroke:0.35px #5b616b;width:194.5px;overflow:hidden">[Wein] redis-sta</div>
<div class="t" style="left:1022.7px;top:521px;font-size:26.8px;letter-spacing:0.91px;color:#5b616b;-webkit-text-stroke:0.35px #5b616b">/test/i</div>
<div class="t" style="left:1179.4px;top:521px;font-size:26.8px;letter-spacing:0.35px;color:#5b616b;-webkit-text-stroke:0.35px #5b616b">/test123/i</div>
<div class="t" style="left:1720.8px;top:521px;font-size:26.8px;letter-spacing:0.25px;color:#5b616b;-webkit-text-stroke:0.35px #5b616b">Admin</div>
<div class="t" style="left:1900.7px;top:521px;font-size:26.8px;letter-spacing:0.27px;color:#5b616b;-webkit-text-stroke:0.35px #5b616b">2024-10-22 10:51:00</div>
<div class="t" style="left:2240.6px;top:521px;font-size:26.8px;letter-spacing:0.55px;color:#5b616b;-webkit-text-stroke:0.35px #5b616b">2024-10-22 10:55:00</div>
<div class="t" style="left:2578.9px;top:521px;font-size:26.8px;letter-spacing:0.43px;color:#5b616b;-webkit-text-stroke:0.35px #5b616b">Expired</div>
<div class="t" style="left:2799.0px;top:521px;font-size:26.8px;letter-spacing:0.23px;color:#3963d6;-webkit-text-stroke:0.35px #3963d6">Unmasking Request</div>
<div class="t" style="left:590.4px;top:601px;font-size:26.8px;letter-spacing:0.00px;color:#5b616b;-webkit-text-stroke:0.35px #5b616b">6</div>
<div class="t" style="left:733.5px;top:601px;font-size:26.8px;letter-spacing:0.49px;color:#5b616b;-webkit-text-stroke:0.35px #5b616b;width:194.5px;overflow:hidden">[Wein] redis-sta</div>
<div class="t" style="left:1022.8px;top:601px;font-size:26.8px;letter-spacing:0.75px;color:#5b616b;-webkit-text-stroke:0.35px #5b616b">/^MyData.*/i</div>
<div class="t" style="left:1261.9px;top:601px;font-size:26.8px;letter-spacing:0.68px;color:#5b616b;-webkit-text-stroke:0.35px #5b616b">/^MyKey.*$/i</div>
<div class="t" style="left:1720.8px;top:601px;font-size:26.8px;letter-spacing:0.25px;color:#5b616b;-webkit-text-stroke:0.35px #5b616b">Admin</div>
<div class="t" style="left:1900.7px;top:601px;font-size:26.8px;letter-spacing:0.16px;color:#5b616b;-webkit-text-stroke:0.35px #5b616b">2024-10-17 17:42:00</div>
<div class="t" style="left:2240.6px;top:601px;font-size:26.8px;letter-spacing:0.26px;color:#5b616b;-webkit-text-stroke:0.35px #5b616b">2024-10-17 19:33:00</div>
<div class="t" style="left:2578.9px;top:601px;font-size:26.8px;letter-spacing:0.43px;color:#5b616b;-webkit-text-stroke:0.35px #5b616b">Expired</div>
<div class="t" style="left:2799.0px;top:601px;font-size:26.8px;letter-spacing:0.23px;color:#3963d6;-webkit-text-stroke:0.35px #3963d6">Unmasking Request</div>
<div class="t" style="left:590.4px;top:681px;font-size:26.8px;letter-spacing:0.00px;color:#5b616b;-webkit-text-stroke:0.35px #5b616b">5</div>
<div class="t" style="left:733.0px;top:681px;font-size:26.8px;letter-spacing:-0.16px;color:#5b616b;-webkit-text-stroke:0.35px #5b616b;width:195.0px;overflow:hidden">TEST Document</div>
<div class="t" style="left:1022.5px;top:681px;font-size:26.8px;letter-spacing:-0.06px;color:#5b616b;-webkit-text-stroke:0.35px #5b616b">regan_test</div>
<div class="t" style="left:1237.0px;top:681px;font-size:26.8px;letter-spacing:0.22px;color:#5b616b;-webkit-text-stroke:0.35px #5b616b">music</div>
<div class="t" style="left:1396.2px;top:681px;font-size:26.8px;letter-spacing:-1.45px;color:#5b616b;-webkit-text-stroke:0.35px #5b616b">_id</div>
<div class="t" style="left:1719.0px;top:681px;font-size:26.8px;letter-spacing:-0.22px;color:#5b616b;-webkit-text-stroke:0.35px #5b616b">Regan P...</div>
<div class="t" style="left:1900.7px;top:681px;font-size:26.8px;letter-spacing:0.23px;color:#5b616b;-webkit-text-stroke:0.35px #5b616b">2024-10-10 17:58:00</div>
<div class="t" style="left:2240.6px;top:681px;font-size:26.8px;letter-spacing:0.37px;color:#5b616b;-webkit-text-stroke:0.35px #5b616b">2024-10-10 18:03:00</div>
<div class="t" style="left:2578.9px;top:681px;font-size:26.8px;letter-spacing:0.43px;color:#5b616b;-webkit-text-stroke:0.35px #5b616b">Expired</div>
<div class="t" style="left:2799.0px;top:681px;font-size:26.8px;letter-spacing:0.23px;color:#3963d6;-webkit-text-stroke:0.35px #3963d6">Unmasking Request</div>
<div class="t" style="left:591.1px;top:761px;font-size:26.8px;letter-spacing:0.00px;color:#5b616b;-webkit-text-stroke:0.35px #5b616b">4</div>
<div class="t" style="left:731.4px;top:761px;font-size:26.8px;letter-spacing:0.66px;color:#5b616b;-webkit-text-stroke:0.35px #5b616b">Mysql 8.0.28</div>
<div class="t" style="left:1023.5px;top:761px;font-size:26.8px;letter-spacing:-0.41px;color:#5b616b;-webkit-text-stroke:0.35px #5b616b">sakila</div>
<div class="t" style="left:1177.9px;top:761px;font-size:26.8px;letter-spacing:0.58px;color:#5b616b;-webkit-text-stroke:0.35px #5b616b">actor</div>
<div class="t" style="left:1327.2px;top:761px;font-size:26.8px;letter-spacing:0.11px;color:#5b616b;-webkit-text-stroke:0.35px #5b616b">last_update</div>
<div class="t" style="left:1720.8px;top:761px;font-size:26.8px;letter-spacing:0.25px;color:#5b616b;-webkit-text-stroke:0.35px #5b616b">Admin</div>
<div class="t" style="left:1900.7px;top:761px;font-size:26.8px;letter-spacing:-0.59px;color:#5b616b;-webkit-text-stroke:0.35px #5b616b">2024-10-10 10:21:11</div>
<div class="t" style="left:2240.6px;top:761px;font-size:26.8px;letter-spacing:-0.24px;color:#5b616b;-webkit-text-stroke:0.35px #5b616b">2024-10-10 10:43:11</div>
<div class="t" style="left:2578.9px;top:761px;font-size:26.8px;letter-spacing:0.43px;color:#5b616b;-webkit-text-stroke:0.35px #5b616b">Expired</div>
<div class="t" style="left:2799.0px;top:761px;font-size:26.8px;letter-spacing:0.23px;color:#3963d6;-webkit-text-stroke:0.35px #3963d6">Unmasking Request</div>
<div class="t" style="left:590.4px;top:841px;font-size:26.8px;letter-spacing:0.00px;color:#5b616b;-webkit-text-stroke:0.35px #5b616b">3</div>
<div class="t" style="left:731.4px;top:841px;font-size:26.8px;letter-spacing:0.66px;color:#5b616b;-webkit-text-stroke:0.35px #5b616b">Mysql 8.0.28</div>
<div class="t" style="left:1023.5px;top:841px;font-size:26.8px;letter-spacing:-0.41px;color:#5b616b;-webkit-text-stroke:0.35px #5b616b">sakila</div>
<div class="t" style="left:1177.9px;top:841px;font-size:26.8px;letter-spacing:0.58px;color:#5b616b;-webkit-text-stroke:0.35px #5b616b">actor</div>
<div class="t" style="left:1327.2px;top:841px;font-size:26.8px;letter-spacing:-0.01px;color:#5b616b;-webkit-text-stroke:0.35px #5b616b">last_name</div>
<div class="t" style="left:1720.8px;top:841px;font-size:26.8px;letter-spacing:0.25px;color:#5b616b;-webkit-text-stroke:0.35px #5b616b">Admin</div>
<div class="t" style="left:1900.7px;top:841px;font-size:26.8px;letter-spacing:-0.59px;color:#5b616b;-webkit-text-stroke:0.35px #5b616b">2024-10-10 10:21:11</div>
<div class="t" style="left:2240.6px;top:841px;font-size:26.8px;letter-spacing:-0.24px;color:#5b616b;-webkit-text-stroke:0.35px #5b616b">2024-10-10 10:43:11</div>
<div class="t" style="left:2578.9px;top:841px;font-size:26.8px;letter-spacing:0.43px;color:#5b616b;-webkit-text-stroke:0.35px #5b616b">Expired</div>
<div class="t" style="left:2799.0px;top:841px;font-size:26.8px;letter-spacing:0.23px;color:#3963d6;-webkit-text-stroke:0.35px #3963d6">Unmasking Request</div>
<div class="t" style="left:590.4px;top:921px;font-size:26.8px;letter-spacing:0.00px;color:#5b616b;-webkit-text-stroke:0.35px #5b616b">2</div>
<div class="t" style="left:731.4px;top:921px;font-size:26.8px;letter-spacing:0.66px;color:#5b616b;-webkit-text-stroke:0.35px #5b616b">Mysql 8.0.28</div>
<div class="t" style="left:1023.5px;top:921px;font-size:26.8px;letter-spacing:-0.41px;color:#5b616b;-webkit-text-stroke:0.35px #5b616b">sakila</div>
<div class="t" style="left:1177.9px;top:921px;font-size:26.8px;letter-spacing:0.58px;color:#5b616b;-webkit-text-stroke:0.35px #5b616b">actor</div>
<div class="t" style="left:1328.2px;top:921px;font-size:26.8px;letter-spacing:0.22px;color:#5b616b;-webkit-text-stroke:0.35px #5b616b">first_name</div>
<div class="t" style="left:1720.8px;top:921px;font-size:26.8px;letter-spacing:0.25px;color:#5b616b;-webkit-text-stroke:0.35px #5b616b">Admin</div>
<div class="t" style="left:1900.7px;top:921px;font-size:26.8px;letter-spacing:-0.59px;color:#5b616b;-webkit-text-stroke:0.35px #5b616b">2024-10-10 10:21:11</div>
<div class="t" style="left:2240.6px;top:921px;font-size:26.8px;letter-spacing:-0.24px;color:#5b616b;-webkit-text-stroke:0.35px #5b616b">2024-10-10 10:43:11</div>
<div class="t" style="left:2578.9px;top:921px;font-size:26.8px;letter-spacing:0.43px;color:#5b616b;-webkit-text-stroke:0.35px #5b616b">Expired</div>
<div class="t" style="left:2799.0px;top:921px;font-size:26.8px;letter-spacing:0.23px;color:#3963d6;-webkit-text-stroke:0.35px #3963d6">Unmasking Request</div>
<div class="t" style="left:590.7px;top:1001px;font-size:26.8px;letter-spacing:0.00px;color:#5b616b;-webkit-text-stroke:0.35px #5b616b">1</div>
<div class="t" style="left:731.4px;top:1001px;font-size:26.8px;letter-spacing:0.66px;color:#5b616b;-webkit-text-stroke:0.35px #5b616b">Mysql 8.0.28</div>
<div class="t" style="left:1023.5px;top:1001px;font-size:26.8px;letter-spacing:-0.41px;color:#5b616b;-webkit-text-stroke:0.35px #5b616b">sakila</div>
<div class="t" style="left:1177.9px;top:1001px;font-size:26.8px;letter-spacing:0.58px;color:#5b616b;-webkit-text-stroke:0.35px #5b616b">actor</div>
<div class="t" style="left:1328.2px;top:1001px;font-size:26.8px;letter-spacing:0.22px;color:#5b616b;-webkit-text-stroke:0.35px #5b616b">first_name</div>
<div class="t" style="left:1720.8px;top:1001px;font-size:26.8px;letter-spacing:0.25px;color:#5b616b;-webkit-text-stroke:0.35px #5b616b">Admin</div>
<div class="t" style="left:1900.7px;top:1001px;font-size:26.8px;letter-spacing:-0.11px;color:#5b616b;-webkit-text-stroke:0.35px #5b616b">2024-10-10 10:17:26</div>
<div class="t" style="left:2240.6px;top:1001px;font-size:26.8px;letter-spacing:0.19px;color:#5b616b;-webkit-text-stroke:0.35px #5b616b">2024-10-10 10:37:26</div>
<div class="t" style="left:2578.9px;top:1001px;font-size:26.8px;letter-spacing:0.43px;color:#5b616b;-webkit-text-stroke:0.35px #5b616b">Expired</div>
<div class="t" style="left:2799.0px;top:1001px;font-size:26.8px;letter-spacing:0.23px;color:#3963d6;-webkit-text-stroke:0.35px #3963d6">Unmasking Request</div>
<div class="t" style="left:601.6px;top:1553px;font-size:26.8px;letter-spacing:0.38px;color:#5b616b;-webkit-text-stroke:0.35px #5b616b">1 - 7 of 7</div>
<div class="t" style="left:3141.4px;top:1553px;font-size:26.8px;letter-spacing:0.00px;color:#fff;-webkit-text-stroke:0.4px #fff">1</div>
<div class="t" style="left:2815.9px;top:1702px;font-size:20.6px;letter-spacing:0.31px;color:#5b616b;-webkit-text-stroke:0.35px #5b616b">Asia/Seoul (GMT+09:00)</div>
<div class="t" style="left:3079.2px;top:1702px;font-size:20.6px;letter-spacing:0.12px;color:#5b616b;-webkit-text-stroke:0.35px #5b616b">QueryPie 10.2.0-ae07e88</div>
</div>
</body>
</html>
